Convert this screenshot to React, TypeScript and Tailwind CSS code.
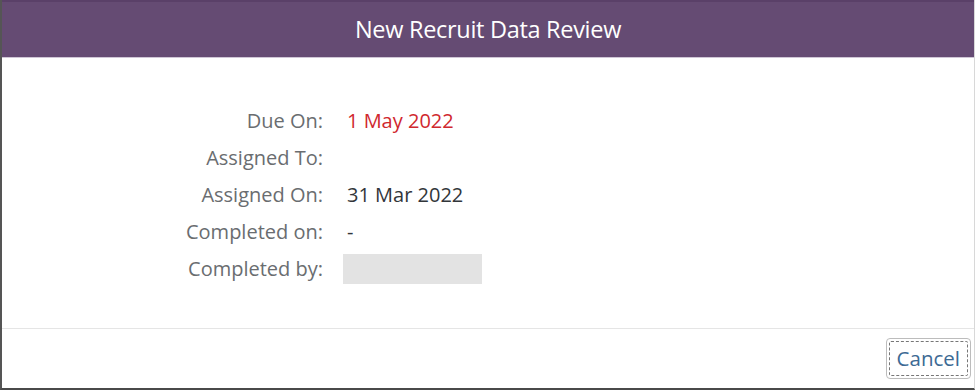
export default function App() {
  const rows: { label: string; value?: string; tone?: "red" | "blank" }[] = [
    { label: "Due On:", value: "1 May 2022", tone: "red" },
    { label: "Assigned To:" },
    { label: "Assigned On:", value: "31 Mar 2022" },
    { label: "Completed on:", value: "-" },
    { label: "Completed by:", tone: "blank" },
  ];

  return (
    <div className="h-[390px] w-[975px] bg-white font-['Open_Sans','Liberation_Sans',sans-serif]">
      <div className="flex h-full flex-col border-b-2 border-l-2 border-r border-b-[#4a4a4a] border-l-[#555555] border-r-[#d8d8d8]">
        {/* header */}
        <div className="flex h-[58px] shrink-0 items-center justify-center border-t-2 border-b border-t-[#5a4068] border-b-[#cfc6d6] bg-[#654b73]">
          <h1 className="text-[23.5px] tracking-[-0.3px] text-white">New Recruit Data Review</h1>
        </div>

        {/* body */}
        <div className="flex-1 pt-[44px]">
          {rows.map((r) => (
            <div key={r.label} className="flex h-[37px] items-center text-[20px]">
              <span className="w-[321px] text-right text-[#6a6d70]">{r.label}</span>
              <span className="ml-6 flex items-center">
                {r.tone === "blank" ? (
                  <span className="ml-[-4px] block h-[30px] w-[139px] bg-[#e3e3e3]" />
                ) : (
                  <span className={r.tone === "red" ? "text-[#d0282e]" : "text-[#32363a]"}>{r.value}</span>
                )}
              </span>
            </div>
          ))}
        </div>

        {/* footer */}
        <div className="flex h-[60px] shrink-0 items-center justify-end border-t border-t-[#e5e5e5] pr-[3px]">
          <button className="rounded-[4px] border border-[#bcbcbc] p-[2px] text-[20.5px] text-[#3d6a94]">
            <span className="block rounded-[2px] border border-dashed border-[#777777] px-[7px] py-[4px] leading-[25px]">
              Cancel
            </span>
          </button>
        </div>
      </div>
    </div>
  );
}
